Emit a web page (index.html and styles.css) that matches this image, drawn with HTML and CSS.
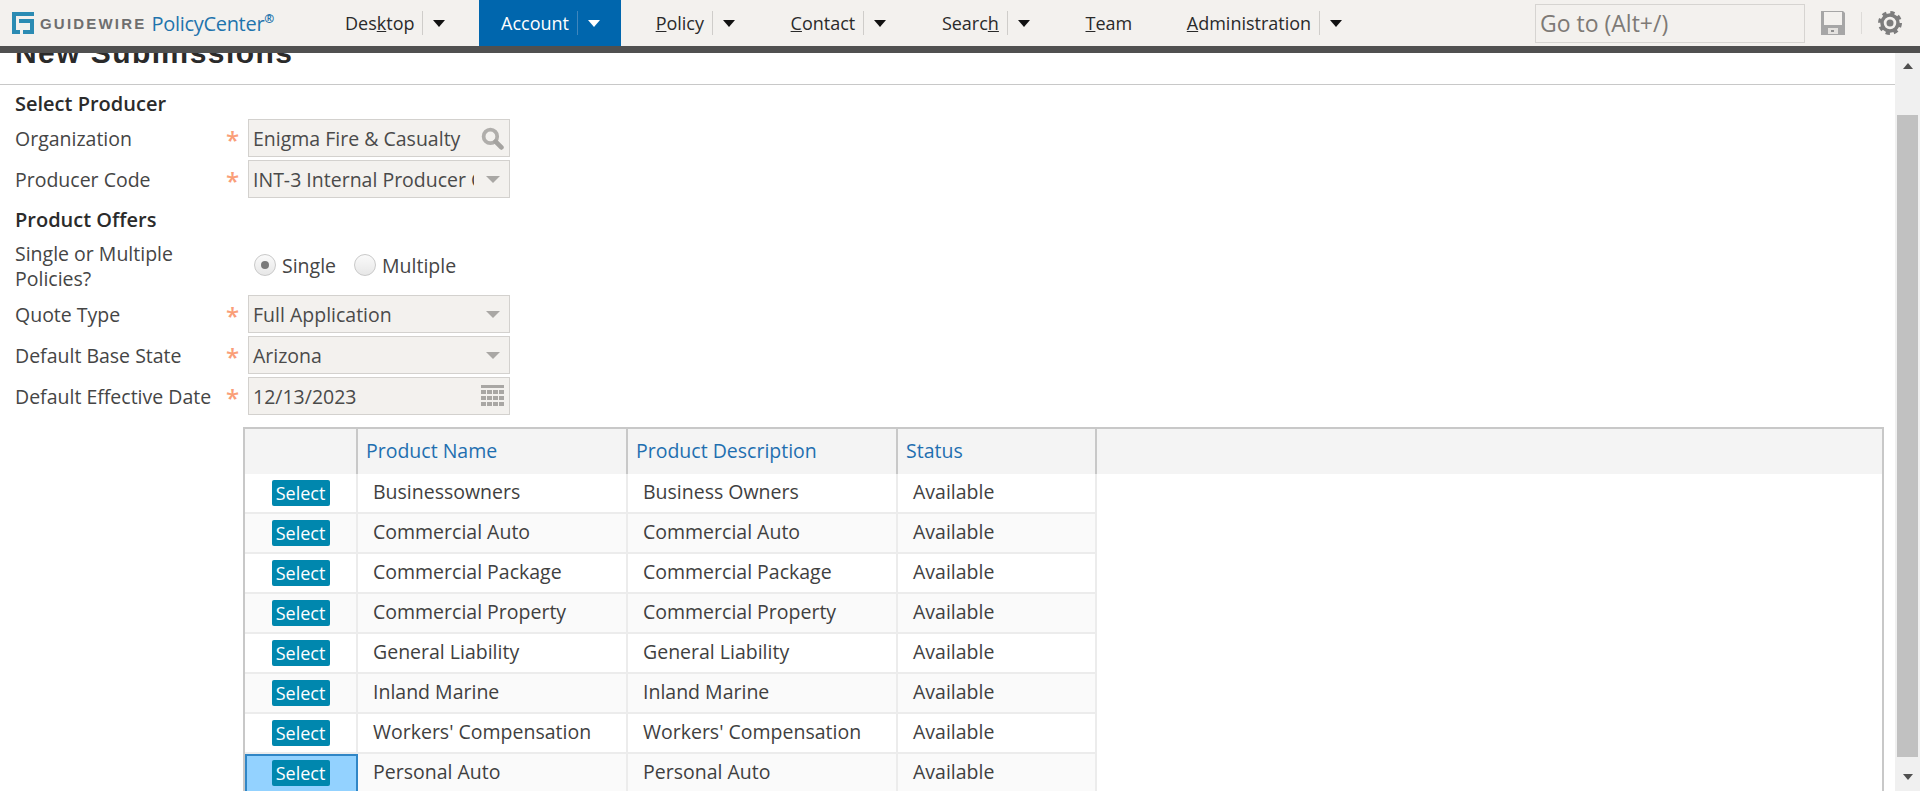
FILE: index.html
```html
<!DOCTYPE html>
<html lang="en">
<head>
<meta charset="utf-8">
<title>New Submissions</title>
<link rel="stylesheet" href="styles.css">
</head>
<body>
<header class="topbar">
  <div class="logo">
    <svg class="logo-mark" viewBox="0 0 22 22" width="22" height="22" aria-hidden="true"><path fill="#2b8bb3" d="M0 0h22v4H4v14h4v4H0z"/><path fill="#2b8bb3" d="M7 7h15v15H11v-4h7v-7H7z"/></svg>
    <span class="logo-word">GUIDEWIRE</span>
    <span class="logo-product">PolicyCenter<sup class="logo-reg">®</sup></span>
  </div>
  <nav class="nav">
    <a class="nav-item"><span>Des<u>k</u>top</span><i class="nav-sep"></i><i class="nav-arrow"></i></a>
    <a class="nav-item is-active"><span>Account</span><i class="nav-sep"></i><i class="nav-arrow"></i></a>
    <a class="nav-item"><span><u>P</u>olicy</span><i class="nav-sep"></i><i class="nav-arrow"></i></a>
    <a class="nav-item"><span><u>C</u>ontact</span><i class="nav-sep"></i><i class="nav-arrow"></i></a>
    <a class="nav-item"><span>Searc<u>h</u></span><i class="nav-sep"></i><i class="nav-arrow"></i></a>
    <a class="nav-item"><span><u>T</u>eam</span></a>
    <a class="nav-item"><span><u>A</u>dministration</span><i class="nav-sep"></i><i class="nav-arrow"></i></a>
  </nav>
  <div class="tools">
    <div class="goto">Go to (Alt+/)</div>
    <svg class="save" viewBox="0 0 24 24" width="24" height="24" aria-hidden="true"><path fill="#a6a6a6" d="M0 0h22l2 2v22H0z"/><path fill="#f3f1ee" d="M3 1h18v13H3z"/><path fill="#e4e2df" d="M7 17h10v6H7z"/><path fill="#8f8f8f" d="M10 19h3v2h-3z"/></svg>
    <i class="tool-sep"></i>
    <svg class="gear" viewBox="0 0 24 24" width="24" height="24" aria-hidden="true"><circle cx="12" cy="12" r="10" fill="none" stroke="#7d7d7d" stroke-width="4" stroke-dasharray="4.100 3.754"/><circle cx="12" cy="12" r="8" fill="none" stroke="#7d7d7d" stroke-width="3.500"/><circle cx="12" cy="12" r="3.500" fill="#7d7d7d"/></svg>
  </div>
</header>
<div class="band"></div>
<div class="workspace">
  <main class="content">
    <h1 class="page-title">New Submissions</h1>
    <section class="form">
      <h2 class="section-title">Select Producer</h2>
      <div class="field">
        <label class="field-label">Organization</label><span class="star">*</span>
        <div class="control"><span class="control-text">Enigma Fire &amp; Casualty</span>
          <svg class="search-icon" viewBox="0 0 22 22" width="23" height="23" aria-hidden="true"><circle cx="9" cy="9" r="6.500" fill="none" stroke="#b0aeab" stroke-width="3.600"/><path d="M14 14l5.500 5.500" stroke="#a5a3a0" stroke-width="4.500" stroke-linecap="round"/></svg>
        </div>
      </div>
      <div class="field">
        <label class="field-label">Producer Code</label><span class="star">*</span>
        <div class="control"><span class="control-text control-clip">INT-3 Internal Producer Code</span><i class="caret"></i></div>
      </div>
      <h2 class="section-title section-second">Product Offers</h2>
      <div class="field field-radio">
        <label class="field-label field-label-wrap">Single or Multiple Policies?</label>
        <div class="radios">
          <span class="radio is-on"></span><span class="radio-text">Single</span>
          <span class="radio"></span><span class="radio-text">Multiple</span>
        </div>
      </div>
      <div class="field">
        <label class="field-label">Quote Type</label><span class="star">*</span>
        <div class="control"><span class="control-text">Full Application</span><i class="caret"></i></div>
      </div>
      <div class="field">
        <label class="field-label">Default Base State</label><span class="star">*</span>
        <div class="control"><span class="control-text">Arizona</span><i class="caret"></i></div>
      </div>
      <div class="field">
        <label class="field-label">Default Effective Date</label><span class="star">*</span>
        <div class="control"><span class="control-text">12/13/2023</span>
          <svg class="cal-icon" viewBox="0 0 23 22" width="23" height="22" aria-hidden="true"><path fill="#a9a7a4" d="M0 0h23v3H0zM0 5h5v4H0zM6 5h5v4H6zM12 5h5v4h-5zM18 5h5v4h-5zM0 11h5v4H0zM6 11h5v4H6zM12 11h5v4h-5zM18 11h5v4h-5zM0 17h5v4H0zM6 17h5v4H6zM12 17h5v4h-5zM18 17h5v4h-5z"/></svg>
        </div>
      </div>
    </section>
    <table class="products">
      <thead>
        <tr><th class="col-select"></th><th class="col-name">Product Name</th><th class="col-desc">Product Description</th><th class="col-status">Status</th><th class="col-fill"></th></tr>
      </thead>
      <tbody>
        <tr><td class="cell-select"><button class="select-btn">Select</button></td><td>Businessowners</td><td>Business Owners</td><td>Available</td><td class="cell-fill"></td></tr>
        <tr class="alt"><td class="cell-select"><button class="select-btn">Select</button></td><td>Commercial Auto</td><td>Commercial Auto</td><td>Available</td><td class="cell-fill"></td></tr>
        <tr><td class="cell-select"><button class="select-btn">Select</button></td><td>Commercial Package</td><td>Commercial Package</td><td>Available</td><td class="cell-fill"></td></tr>
        <tr class="alt"><td class="cell-select"><button class="select-btn">Select</button></td><td>Commercial Property</td><td>Commercial Property</td><td>Available</td><td class="cell-fill"></td></tr>
        <tr><td class="cell-select"><button class="select-btn">Select</button></td><td>General Liability</td><td>General Liability</td><td>Available</td><td class="cell-fill"></td></tr>
        <tr class="alt"><td class="cell-select"><button class="select-btn">Select</button></td><td>Inland Marine</td><td>Inland Marine</td><td>Available</td><td class="cell-fill"></td></tr>
        <tr><td class="cell-select"><button class="select-btn">Select</button></td><td>Workers' Compensation</td><td>Workers' Compensation</td><td>Available</td><td class="cell-fill"></td></tr>
        <tr class="alt"><td class="cell-select is-selected"><button class="select-btn">Select</button></td><td>Personal Auto</td><td>Personal Auto</td><td>Available</td><td class="cell-fill"></td></tr>
      </tbody>
    </table>
  </main>
  <aside class="scrollbar">
    <i class="arrow-up"></i>
    <div class="thumb"></div>
    <i class="arrow-down"></i>
  </aside>
</div>
</body>
</html>
```
FILE: styles.css
```css
* { box-sizing: border-box; }
html, body { margin: 0; height: 100%; }
body {
  display: flex;
  flex-direction: column;
  height: 100vh;
  overflow: hidden;
  background: #fff;
  color: #3c3c3c;
  font-family: "Open Sans", "Liberation Sans", sans-serif;
  font-size: 19.500px;
}
.topbar {
  flex: none;
  display: flex;
  align-items: stretch;
  height: 46px;
  background: #f3f1ee;
}
.band { flex: none; height: 7px; background: #505050; }
.logo { width: 323px; flex: none; display: flex; align-items: center; padding-left: 12px; }
.logo-mark { flex: none; }
.logo-word {
  margin-left: 6px;
  font-family: "Liberation Sans", sans-serif;
  font-weight: 700;
  font-size: 15px;
  letter-spacing: 2.200px;
  color: #6e6e6e;
}
.logo-product { margin-left: 5px; font-size: 20px; color: #1f74ad; letter-spacing: -.3px; }
.logo-reg { font-size: 12px; font-weight: 700; line-height: 0; vertical-align: 8px; }
.nav { display: flex; align-items: stretch; gap: 12.600px; font-size: 18px; color: #2a2a2a; }
.nav-item { display: flex; align-items: center; padding: 0 20px 0 22px; white-space: nowrap; }
.nav-item.is-active { background: #0066ad; color: #fff; }
.nav-sep { width: 1px; height: 24px; margin: 0 9px 0 8px; background: #cfcdca; }
.is-active .nav-sep { background: #3f86bd; }
.nav-arrow { width: 0; height: 0; border-style: solid; border-width: 7px 6.500px 0; border-color: #111 transparent transparent; margin: 0 1px; }
.is-active .nav-arrow { border-top-color: #fff; }
.tools { margin-left: auto; display: flex; align-items: center; padding-right: 18px; }
.goto {
  width: 270px; height: 39px; line-height: 36px;
  padding-left: 4px;
  border: 1px solid #d6d4d1;
  color: #7e7a76; font-size: 23px;
}
.save { margin-left: 16px; }
.tool-sep { width: 1px; height: 22px; margin: 0 16px; background: #dddbd8; }
.content { flex: 1; min-width: 0; height: 100%; overflow: hidden; }
.workspace { flex: 1; min-height: 0; display: flex; }
.page-title {
  margin: -14px 0 0;
  padding: 0 0 0 15px;
  height: 46px;
  line-height: 28px;
  border-bottom: 1px solid #c8c8c8;
  font-family: "Liberation Sans", sans-serif;
  font-size: 30px;
  font-weight: 700;
  letter-spacing: 1.450px;
  color: #2a2a2a;
}
.form { padding-left: 15px; }
.section-title { margin: 0; height: 34px; line-height: 38px; font-size: 20px; font-weight: 600; color: #2b2b2b; }
.section-second { height: 36px; line-height: 37px; }
.field { display: flex; align-items: center; height: 38px; margin-bottom: 3px; }
.field-label { width: 211px; flex: none; color: #454545; }
.field-label-wrap { width: 160px; line-height: 25px; }
.field-radio { height: 58px; margin-bottom: 0; }
.star { width: 22px; flex: none; color: #fa9e78; font-size: 24px; font-weight: 600; line-height: 38px; padding-top: 4px; }
.control {
  width: 262px; height: 38px; flex: none;
  display: flex; align-items: center; justify-content: space-between;
  padding: 0 5px 0 4px;
  background: #f3f1ee;
  border: 1px solid #d3d1ce;
  color: #4a4a4a;
  overflow: hidden;
}
.control-text { white-space: nowrap; }
.control-clip { width: 221px; overflow: hidden; }
.caret { flex: none; margin-right: 4px; width: 0; height: 0; border-style: solid; border-width: 7px 7px 0; border-color: #a9a7a4 transparent transparent; }
.radios { display: flex; align-items: center; margin: 0 0 2px 79px; }
.radio {
  width: 22px; height: 22px; border-radius: 50%;
  border: 1px solid #c9c9c9;
  background: linear-gradient(#fafafa, #e7e7e7);
  display: flex; align-items: center; justify-content: center;
}
.radio.is-on::after { content: ""; width: 8px; height: 8px; border-radius: 50%; background: #7a7a7a; }
.radio-text { margin: 0 18px 0 6px; color: #454545; }
.products {
  margin: 12px 0 0 243px;
  width: 1641px;
  table-layout: fixed;
  border-collapse: separate;
  border-spacing: 0;
  border-top: 2px solid #c8c8c8;
  border-left: 2px solid #c8c8c8;
  border-right: 2px solid #c8c8c8;
}
.products th {
  height: 45px;
  background: #f4f4f4;
  border-right: 2px solid #c8c8c8;
  padding: 0 0 2px 8px;
  text-align: left;
  font-weight: 400;
  color: #1f6fb0;
  white-space: nowrap;
}
.products th.col-fill { border-right: 0; }
.col-select { width: 113px; }
.col-name, .col-desc { width: 270px; }
.col-status { width: 199px; }
.products td {
  height: 40px;
  padding: 0 0 3px 15px;
  border-right: 2px solid #ececec;
  border-bottom: 2px solid #ececec;
  white-space: nowrap;
  color: #3f3f3f;
}
.products .alt td { background: #fafafa; }
.products td.cell-fill { border: 0; background: #fff; }
.products td.cell-select { padding: 0 0 3px; text-align: center; }
.products td.is-selected { background: #93d2ff; outline: 2px solid #3086c6; outline-offset: -2px; }
.select-btn {
  display: inline-block;
  vertical-align: middle;
  width: 58px; height: 26px;
  padding: 0;
  border: 0; border-radius: 2px;
  background: #0087ae;
  color: #fff;
  font: 400 18px/26px "Open Sans", sans-serif;
}
.scrollbar {
  flex: none; width: 25px; background: #f0f0f0;
  display: flex; flex-direction: column; align-items: center;
}
.thumb { width: 21px; height: 642px; margin-top: 46px; background: #c1c1c1; }
.arrow-up, .arrow-down { width: 0; height: 0; border-style: solid; border-color: transparent; }
.arrow-up { margin-top: 10px; border-width: 0 5.500px 6px; border-bottom-color: #505050; }
.arrow-down { margin-top: 17px; border-width: 6px 5.500px 0; border-top-color: #505050; }
```
